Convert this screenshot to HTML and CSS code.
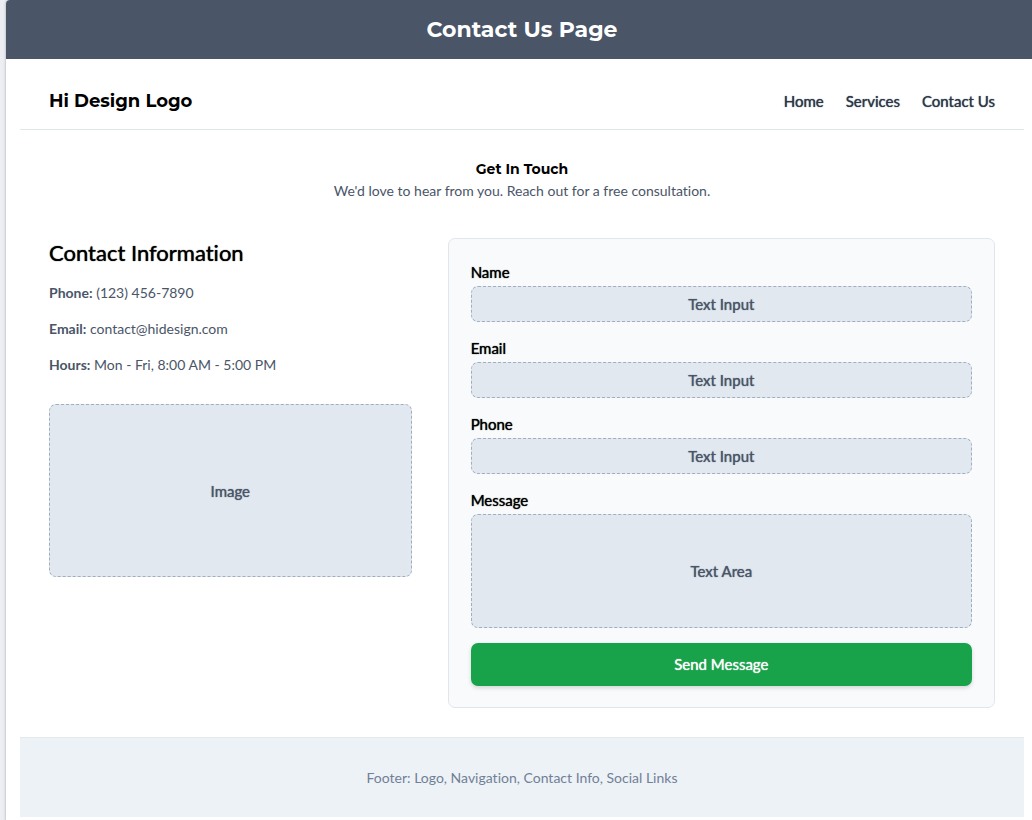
FILE: index.html
```html
<!DOCTYPE html>
<html lang="en">
<head>
<meta charset="utf-8">
<meta name="viewport" content="width=device-width, initial-scale=1">
<title>Contact Us Page</title>
<link rel="stylesheet" href="styles.css">
</head>
<body>
<div class="page">
  <div class="titlebar"><h1 class="page-title">Contact Us Page</h1></div>
  <div class="site">
    <header class="header">
      <div class="logo">Hi Design Logo</div>
      <nav class="nav">
        <a href="#home">Home</a>
        <a href="#services">Services</a>
        <a href="#contact">Contact Us</a>
      </nav>
    </header>
    <main class="main">
      <section class="intro">
        <h2 class="intro-title">Get In Touch</h2>
        <p class="intro-text">We'd love to hear from you. Reach out for a free consultation.</p>
      </section>
      <div class="columns">
        <section class="info">
          <h2 class="info-title">Contact Information</h2>
          <p class="info-line"><strong>Phone:</strong> (123) 456-7890</p>
          <p class="info-line"><strong>Email:</strong> contact@hidesign.com</p>
          <p class="info-line"><strong>Hours:</strong> Mon - Fri, 8:00 AM - 5:00 PM</p>
          <div class="image">Image</div>
        </section>
        <form class="card">
          <div class="field">
            <label for="name">Name</label>
            <input class="control" id="name" type="text" placeholder="Text Input">
          </div>
          <div class="field">
            <label for="email">Email</label>
            <input class="control" id="email" type="email" placeholder="Text Input">
          </div>
          <div class="field">
            <label for="phone">Phone</label>
            <input class="control" id="phone" type="tel" placeholder="Text Input">
          </div>
          <div class="field">
            <label for="message">Message</label>
            <textarea class="control control-area" id="message" placeholder="Text Area"></textarea>
          </div>
          <button class="send" type="button">Send Message</button>
        </form>
      </div>
    </main>
    <footer class="footer">Footer: Logo, Navigation, Contact Info, Social Links</footer>
  </div>
</div>
</body>
</html>
```
FILE: styles.css
```css
* { box-sizing: border-box; }

body {
  margin: 0;
  padding-left: 6px;
  background: #edeef3;
  color: #000;
  font-family: Lato, "Liberation Sans", sans-serif;
  font-size: 14px;
  line-height: 22px;
  font-variant-ligatures: none;
}

h1, h2, p { margin: 0; }

.page {
  min-height: 100vh;
  background: #fff;
  border-top-left-radius: 4px;
  box-shadow: 0 0 2px 1px #c8c9d2;
}

.titlebar {
  padding: 15px 8px 14px 14px;
  background: #4a5568;
  border-top-left-radius: 4px;
  color: #fff;
  text-align: center;
}

.page-title, .logo, .intro-title {
  font-family: Montserrat, Inter, sans-serif;
  font-weight: 700;
}

.page-title { font-size: 22px; line-height: 30px; }

.site { padding: 14px 8px 3px 14px; }

.header {
  display: flex;
  align-items: center;
  justify-content: space-between;
  padding: 14px 29px;
  border-bottom: 1px solid #e2e8e9;
}

.logo { font-size: 18px; line-height: 28px; }

.nav { display: flex; gap: 22px; }

.nav a {
  color: #2d3748;
  text-decoration: none;
}

/* Regular Lato with a soft edge: heavier than 400, narrower than 700 */
.nav a, .info-title, .image, .field label, .control, .send {
  font-family: Lato, "Liberation Sans", sans-serif;
  font-size: 15px;
  font-weight: 400;
  line-height: 22px;
  text-shadow: 0 0 1px currentColor;
}

.main { padding: 28px 29px 29px; }

.intro { margin-bottom: 36px; text-align: center; }

.intro-title { font-size: 14px; line-height: 22px; }

.intro-text { color: #4a5568; }

.columns {
  display: grid;
  grid-template-columns: 53fr 80fr;
  gap: 36px;
}

.info .info-title {
  margin-bottom: 15px;
  font-size: 22px;
  line-height: 29px;
}

.info-line { margin-bottom: 14px; color: #4a5568; }

.info-line strong { font-weight: 700; }

.image {
  display: flex;
  align-items: center;
  justify-content: center;
  height: 173px;
  margin-top: 28px;
  background: #e2e8f0;
  border: 1px dashed #a0aec0;
  border-radius: 7px;
  color: #4a5568;
}

.card {
  display: flex;
  flex-direction: column;
  gap: 15px;
  padding: 22px 22px 21px;
  background: #f9fafc;
  border: 1px solid #e2e6ea;
  border-radius: 7px;
}

.field { display: flex; flex-direction: column; gap: 3px; }

.control {
  width: 100%;
  height: 36px;
  margin: 0;
  padding: 0 14px 1px;
  background: #e2e8f0;
  border: 1px dashed #a0aec0;
  border-radius: 7px;
  color: #4a5568;
  text-align: center;
}

.control::placeholder { color: #4a5568; opacity: 1; }

.control-area {
  display: block;
  height: 114px;
  padding: 45px 14px;
  resize: none;
}

.send {
  padding: 10px 14px 11px;
  background: #18a34a;
  border: 0;
  border-radius: 7px;
  box-shadow: 0 2px 4px rgba(0, 0, 0, 0.15);
  color: #fff;
}

.footer {
  padding: 29px 14px 28px;
  background: #edf2f6;
  border-top: 1px solid #e2e8ec;
  color: #718096;
  text-align: center;
}
```
